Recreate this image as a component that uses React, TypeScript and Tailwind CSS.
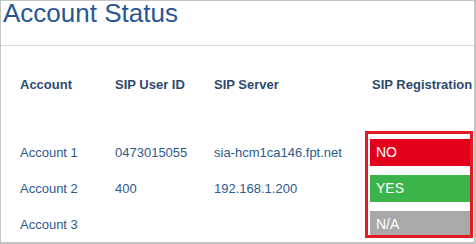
import React from 'react';

const rows = [
  { account: 'Account 1', userId: '0473015055', server: 'sia-hcm1ca146.fpt.net' },
  { account: 'Account 2', userId: '400', server: '192.168.1.200' },
  { account: 'Account 3', userId: '', server: '' },
];

const statuses = [
  { label: 'NO', color: 'bg-[#e2001b]' },
  { label: 'YES', color: 'bg-[#3bb44a]' },
  { label: 'N/A', color: 'bg-[#a9a9a9]' },
];

const App = () => {
  return (
    <div
      className="w-[476px] h-[244px] bg-white border-t border-l border-r-2 border-b-2 border-[#c4c4c4] overflow-hidden"
      style={{ fontFamily: '"Liberation Sans", Arial, sans-serif' }}
    >
      {/* Title */}
      <h1 className="pl-[2px] text-[26px] leading-[24px] text-[#2a5793]">Account Status</h1>
      <div className="mt-[20px] h-px bg-[#dcdcdc]" />

      <div className="flex mt-[31px]">
        {/* Left columns */}
        <div className="pl-[19px] w-[364px]">
          <div className="grid grid-cols-[95px_99px_150px] h-[15px] text-[13px] leading-[15px] font-bold text-[#2e4a6c]">
            <div>Account</div>
            <div>SIP User ID</div>
            <div>SIP Server</div>
          </div>
          <div className="mt-[47px] flex flex-col gap-[9px]">
            {rows.map((r) => (
              <div
                key={r.account}
                className="grid grid-cols-[95px_99px_150px] h-[27px] items-center text-[13px] leading-[15px] text-[#2e5a8b]"
              >
                <div>{r.account}</div>
                <div>{r.userId}</div>
                <div>{r.server}</div>
              </div>
            ))}
          </div>
        </div>

        {/* Registration column */}
        <div className="flex-1">
          <div className="pl-[7px] h-[15px] text-[13px] leading-[15px] font-bold text-[#2e4a6c] whitespace-nowrap">
            SIP Registration
          </div>
          <div className="mt-[39px] w-[108px] h-[107px] border-[3px] border-[#e41b23] pt-[5px] pl-[2px] overflow-hidden flex flex-col gap-[9px]">
            {statuses.map((s) => (
              <div
                key={s.label}
                className={`${s.color} h-[27px] shrink-0 flex items-center pl-[6px] text-[14px] text-white`}
              >
                {s.label}
              </div>
            ))}
          </div>
        </div>
      </div>
    </div>
  );
};

export default App;
